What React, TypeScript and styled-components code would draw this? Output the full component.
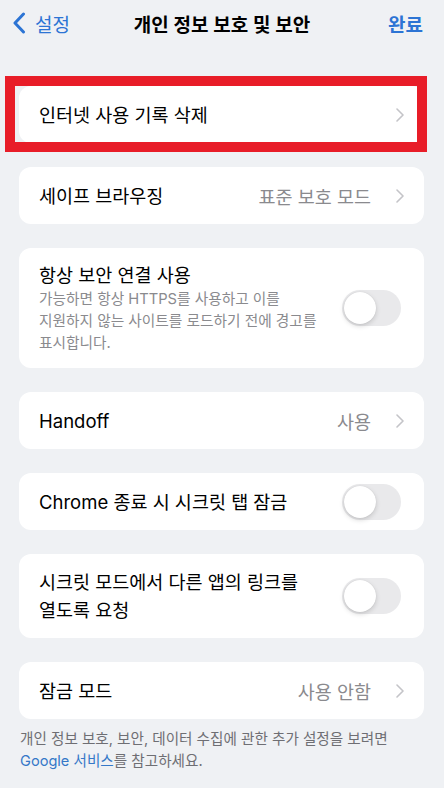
import React from "react";
import styled, { createGlobalStyle } from "styled-components";

const GlobalStyle = createGlobalStyle`
  html, body { margin: 0; padding: 0; background: #eff1f4; }
  body { font-family: "Inter", "Noto Sans CJK KR", sans-serif; -webkit-font-smoothing: antialiased; }
  * { box-sizing: border-box; }
`;

const Page = styled.div`
  width: 444px;
  min-height: 788px;
  background: #eff1f4;
  color: #000;
`;

const NavBar = styled.header`
  height: 46px;
  display: grid;
  grid-template-columns: 1fr auto 1fr;
  align-items: center;
  padding: 0 12px;
`;

const BackButton = styled.div`
  display: flex;
  align-items: center;
  gap: 9px;
  color: #2c74d4;
  font-size: 19px;
`;

const NavTitle = styled.div`
  font-size: 19px;
  font-weight: 600;
`;

const DoneButton = styled.div`
  justify-self: end;
  margin-right: 9px;
  color: #2c74d4;
  font-size: 19px;
  font-weight: 600;
`;

const List = styled.main`
  display: flex;
  flex-direction: column;
  gap: 24px;
  padding: 40px 20px 0 19px;
`;

const CardWrap = styled.div`
  position: relative;
`;

const Highlight = styled.div`
  position: absolute;
  top: -10px;
  bottom: -9px;
  left: -14px;
  right: -3px;
  border: 10px solid #e81d28;
  pointer-events: none;
`;

const Card = styled.section`
  background: #fff;
  border-radius: 12px;
`;

const Row = styled.div<{ $tall?: boolean }>`
  display: flex;
  align-items: center;
  gap: 12px;
  min-height: 57px;
  padding: ${(p) => (p.$tall ? "14px" : "0")} 20px ${(p) => (p.$tall ? "14px" : "0")} 20px;
`;

const Texts = styled.div`
  flex: 1;
  display: flex;
  flex-direction: column;
`;

const Label = styled.div<{ $lh?: number }>`
  font-size: 18.5px;
  line-height: ${(p) => p.$lh ?? 26}px;
`;

const Desc = styled.div`
  font-size: 14.7px;
  line-height: 22px;
  color: #8a8a8e;
`;

const Value = styled.div`
  font-size: 18.5px;
  color: #8a8a8e;
`;

const ChevronBox = styled.span`
  display: flex;
  width: 11px;
  justify-content: flex-end;
  margin-left: 10px;
`;

const Track = styled.div`
  flex: none;
  width: 59px;
  height: 36px;
  border-radius: 18px;
  background: #e9e9eb;
  margin-right: 3px;
  padding: 2px;
  display: flex;
  align-items: center;
`;

const Knob = styled.div`
  width: 32px;
  height: 32px;
  border-radius: 50%;
  background: #fff;
  box-shadow: 0 2px 5px rgba(0, 0, 0, 0.16), 0 0 1px rgba(0, 0, 0, 0.12);
`;

const Footer = styled.p`
  margin: 0;
  padding: 9px 20px 0 1px;
  font-size: 14.6px;
  line-height: 22px;
  color: #6e6e73;
`;

const Link = styled.span`
  color: #3578c8;
`;

const Chevron = () => (
  <ChevronBox>
    <svg width="8" height="14" viewBox="0 0 8 14" fill="none">
      <path d="M1 1l6 6-6 6" stroke="#c4c4c8" strokeWidth="1.6" strokeLinecap="round" strokeLinejoin="round" />
    </svg>
  </ChevronBox>
);

const Toggle = () => (
  <Track>
    <Knob />
  </Track>
);

export default function App() {
  return (
    <Page>
      <GlobalStyle />
      <NavBar>
        <BackButton>
          <svg width="14" height="22" viewBox="0 0 14 22" fill="none">
            <path d="M11.5 2L3 11l8.5 9" stroke="#2c74d4" strokeWidth="3" strokeLinecap="round" strokeLinejoin="round" />
          </svg>
          <span>설정</span>
        </BackButton>
        <NavTitle>개인 정보 보호 및 보안</NavTitle>
        <DoneButton>완료</DoneButton>
      </NavBar>
      <List>
        <CardWrap>
          <Card>
            <Row>
              <Texts>
                <Label>인터넷 사용 기록 삭제</Label>
              </Texts>
              <Chevron />
            </Row>
          </Card>
          <Highlight />
        </CardWrap>
        <Card>
          <Row>
            <Texts>
              <Label>세이프 브라우징</Label>
            </Texts>
            <Value>표준 보호 모드</Value>
            <Chevron />
          </Row>
        </Card>
        <Card>
          <Row $tall>
            <Texts>
              <Label>항상 보안 연결 사용</Label>
              <Desc>
                가능하면 항상 HTTPS를 사용하고 이를
                <br />
                지원하지 않는 사이트를 로드하기 전에 경고를
                <br />
                표시합니다.
              </Desc>
            </Texts>
            <Toggle />
          </Row>
        </Card>
        <Card>
          <Row>
            <Texts>
              <Label>Handoff</Label>
            </Texts>
            <Value>사용</Value>
            <Chevron />
          </Row>
        </Card>
        <Card>
          <Row>
            <Texts>
              <Label>Chrome 종료 시 시크릿 탭 잠금</Label>
            </Texts>
            <Toggle />
          </Row>
        </Card>
        <Card>
          <Row $tall>
            <Texts>
              <Label $lh={28}>
                시크릿 모드에서 다른 앱의 링크를
                <br />
                열도록 요청
              </Label>
            </Texts>
            <Toggle />
          </Row>
        </Card>
        <div>
          <Card>
            <Row>
              <Texts>
                <Label>잠금 모드</Label>
              </Texts>
              <Value>사용 안함</Value>
              <Chevron />
            </Row>
          </Card>
          <Footer>
            개인 정보 보호, 보안, 데이터 수집에 관한 추가 설정을 보려면
            <br />
            <Link>Google 서비스</Link>를 참고하세요.
          </Footer>
        </div>
      </List>
    </Page>
  );
}
